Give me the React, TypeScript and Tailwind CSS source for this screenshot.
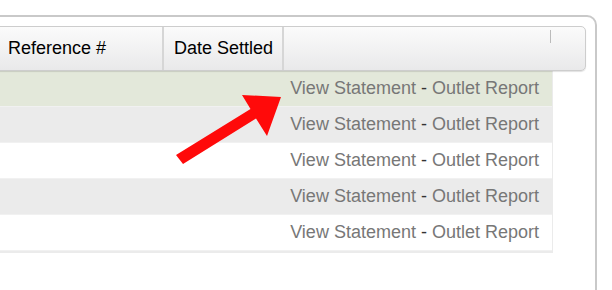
const rows = [
  { bg: "bg-[#e3e8da]" },
  { bg: "bg-[#ebebeb]" },
  { bg: "bg-white" },
  { bg: "bg-[#ebebeb]" },
  { bg: "bg-white" },
];

function Arrow() {
  return (
    <svg
      className="pointer-events-none absolute left-0 top-0"
      width="612"
      height="290"
      viewBox="0 0 612 290"
    >
      <polygon
        points="176,155 250.5,109 242,95 281,97 267,136 256,118.5 183,164"
        fill="#ff0a0a"
      />
    </svg>
  );
}

export default function App() {
  return (
    <div
      className="relative h-[290px] w-[612px] overflow-hidden bg-white"
      style={{ fontFamily: '"Liberation Sans", Arial, sans-serif' }}
    >
      <div className="ml-[-20px] mt-[15px] h-[300px] w-[617px] rounded-tr-[10px] border-2 border-[#c9c9c9] pr-[9px] pt-[9px]">
        <div className="relative flex h-[45px] w-full rounded-r-[5px] border border-[#cdcdcd] bg-gradient-to-b from-[#fbfbfb] to-[#e9e9ea] text-[18px] text-black shadow-[0_1px_1px_rgba(0,0,0,0.12)]">
          <div className="flex w-[181px] items-center border-r-2 border-[#d6d6d6] pl-[25px]">
            Reference #
          </div>
          <div className="flex w-[120px] items-center border-r-2 border-[#d6d6d6] pl-[10px]">
            Date Settled
          </div>
          <div className="flex-1" />
          <div className="absolute right-[34px] top-[3px] h-[13px] w-px bg-[#bbb]" />
        </div>
        <div className="w-[571px] border-b-2 border-r border-[#ebebeb]">
          {rows.map((r, i) => (
            <div
              key={i}
              className={`flex h-[36px] items-center justify-end whitespace-pre border-b border-[#f1f1f1] pr-[13px] text-[18px] text-[#777] ${r.bg}`}
            >
              <span>View Statement</span>
              <span className="text-[#333]"> - </span>
              <span>Outlet Report</span>
            </div>
          ))}
        </div>
      </div>
      <Arrow />
    </div>
  );
}
